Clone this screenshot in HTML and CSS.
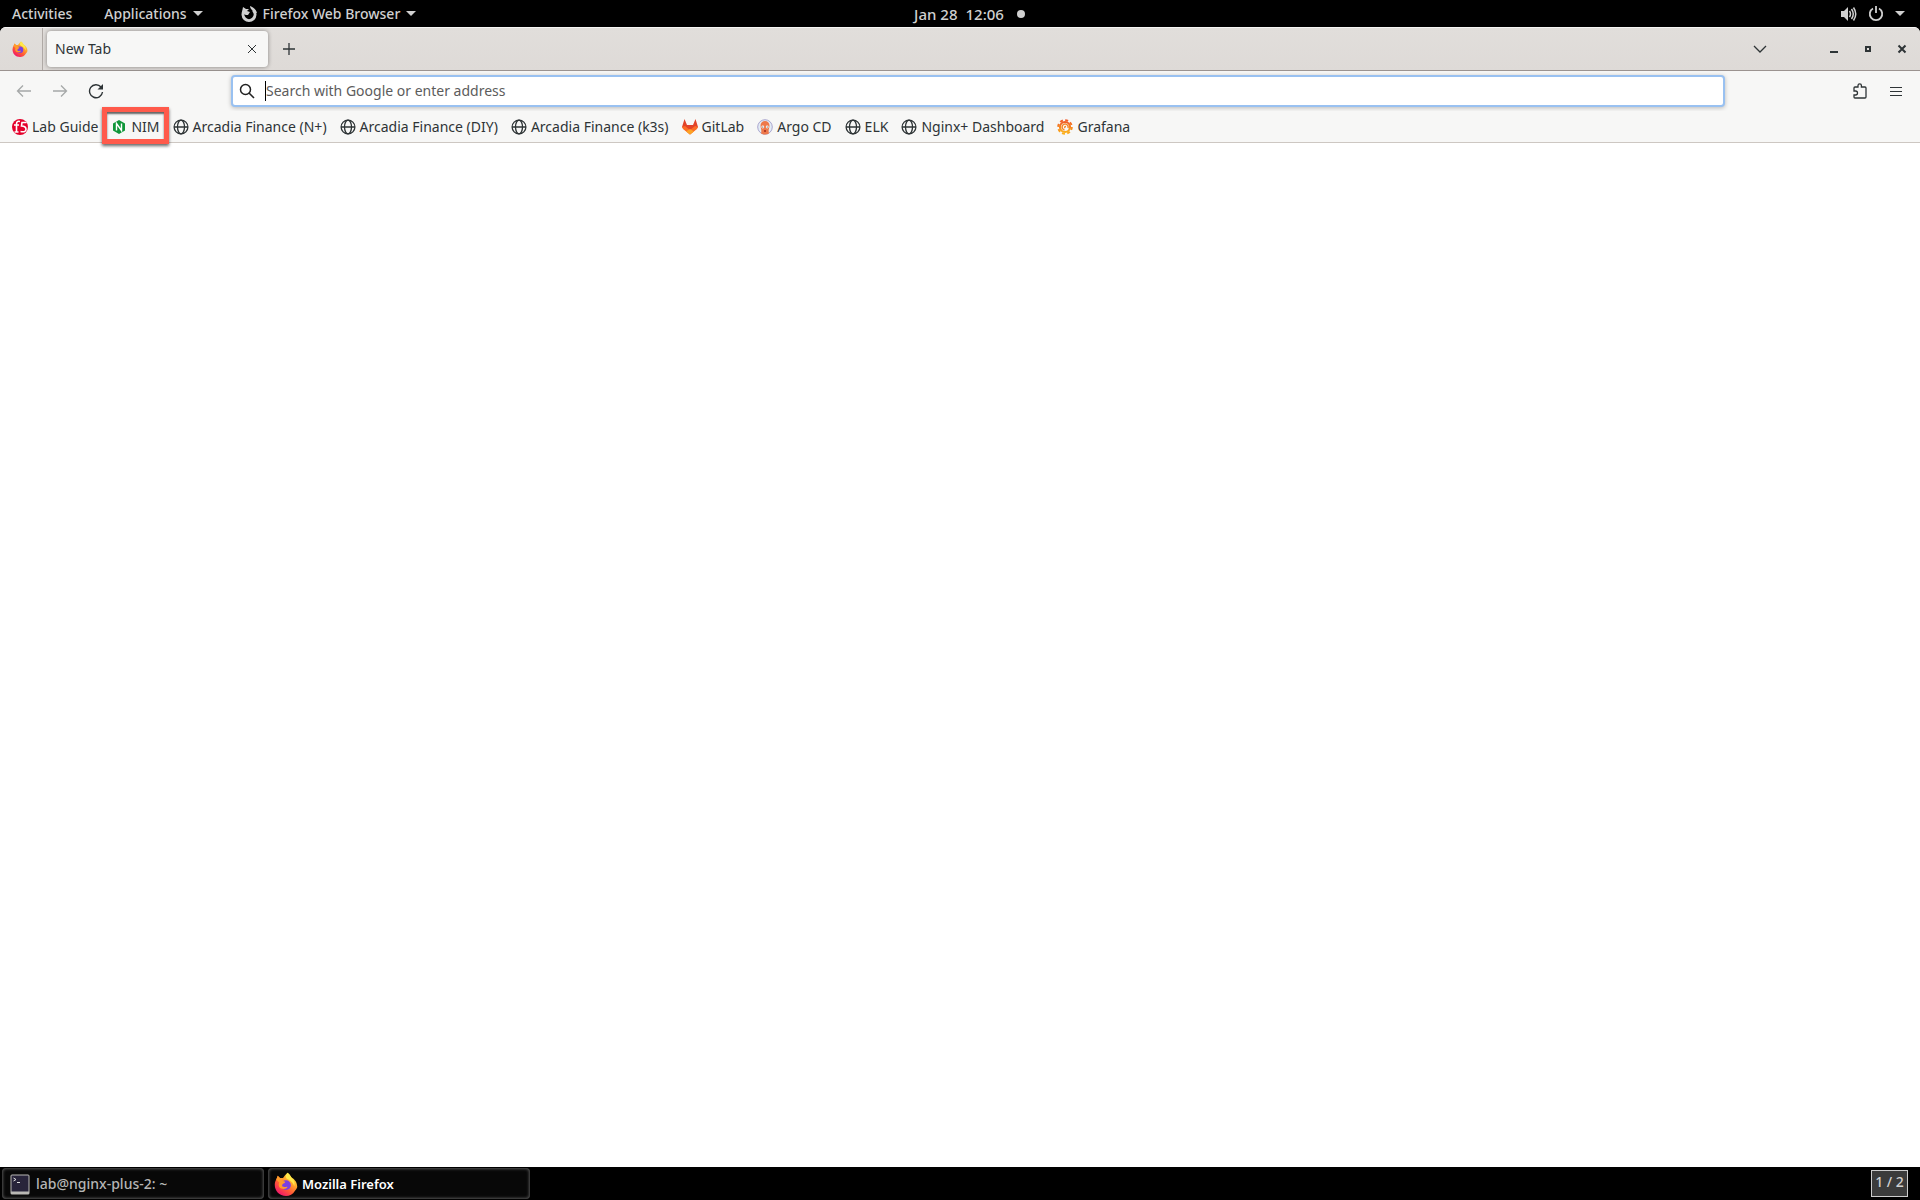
FILE: index.html
```html
<!DOCTYPE html>
<html lang="en">
<head>
<meta charset="utf-8">
<meta name="viewport" content="width=device-width, initial-scale=1">
<title>Mozilla Firefox</title>
<link rel="stylesheet" href="styles.css">
</head>
<body>
<svg class="defs" aria-hidden="true">
  <defs>
    <linearGradient id="ff-body" x1="0.85" y1="0.05" x2="0.2" y2="0.95">
      <stop offset="0" stop-color="#fff04a"/><stop offset="0.35" stop-color="#ffa62b"/>
      <stop offset="0.65" stop-color="#ff5a36"/><stop offset="1" stop-color="#f0136e"/>
    </linearGradient>
    <linearGradient id="gf" x1="0" y1="0" x2="0" y2="1">
      <stop offset="0" stop-color="#f05a28"/><stop offset="1" stop-color="#fbb01c"/>
    </linearGradient>
    <symbol id="firefox" viewBox="0 0 32 32">
      <path fill="url(#ff-body)" d="M18 1c3 2 4 4 5 6 5 3 8 7 8 13a15 12 0 0 1-3 5C25 30 21 32 16 32 7 32 1 25 1 17c0-3 1-6 3-9l1-3 3 3 4 0c2-3 4-5 6-7z"/>
      <path fill="#ffe84a" d="M18 1c4 3 4 5 6 7 3 3 4 7 3 11-1-4-4-7-8-9-4-2-4-5-1-9z"/>
      <circle cx="16" cy="17.500" r="6.500" fill="#7a3fe0"/>
      <path fill="#ff9a2a" d="M3 10l2-5 3 3h4c-1 1-1 3 0 4l3 1c0 2-3 2-4 4s1 3 3 3 3-1 4 0c-1 3-8 4-11 0-1-2-1-4 0-6z"/>
    </symbol>
    <symbol id="globe" viewBox="0 0 16 16">
      <g fill="none" stroke="#2e3436" stroke-width="1.300"><circle cx="8" cy="8" r="6.900"/><ellipse cx="8" cy="8" rx="3.500" ry="6.900"/><path d="M1 8h14"/></g>
    </symbol>
  </defs>
</svg>

<header class="panel">
  <div class="panel-side">
    <button class="activities">Activities</button>
    <button class="applications">Applications <span class="caret"></span></button>
    <button class="app-menu">
      <svg width="16" height="16" viewBox="0 0 16 16" aria-hidden="true"><path fill="none" stroke="#d0d0d0" stroke-width="3" d="M3.500 4.500A6 6 0 1 0 12.500 4.500"/><path fill="#d0d0d0" d="M1 6l1-5 3 2h3l-2 2 3 1-2 3H5L2 8zM9 0c3 1 6 3 7 7l-4-1c0-2-3-3-3-6z"/></svg>
      Firefox Web Browser <span class="caret"></span>
    </button>
  </div>
  <button class="clock"><span>Jan 28</span> <span>12:06</span><span class="dot"></span></button>
  <div class="panel-side panel-status">
    <button class="system" aria-label="System menu">
      <svg width="16" height="16" viewBox="0 0 16 16" aria-hidden="true"><path fill="#d0d0d0" d="M0 5h3l4-4v14l-4-4H0z"/><path fill="none" stroke="#d0d0d0" stroke-width="1.500" d="M8.500 5q2 3 0 6M10.500 3q3.500 5 0 10M12.500 1.500q4.500 6.500 0 13"/></svg>
      <svg width="16" height="16" viewBox="0 0 16 16" aria-hidden="true"><path fill="none" stroke="#d0d0d0" stroke-width="1.800" d="M5 2.500a6.200 6.200 0 1 0 6 0M8 0v7"/></svg>
      <span class="caret"></span>
    </button>
  </div>
</header>

<main class="window">
  <div class="tabstrip">
    <button class="pinned" aria-label="Firefox View"><svg width="16" height="16"><use href="#firefox"/></svg></button>
    <div class="tab">
      <span>New Tab</span>
      <button aria-label="Close tab"><svg width="10" height="10" viewBox="0 0 10 10"><path class="line" d="M1 1l8 8M9 1L1 9"/></svg></button>
    </div>
    <button class="new-tab" aria-label="New tab"><svg width="12" height="12" viewBox="0 0 12 12"><path class="line" stroke-width="1.300" d="M6 0v12M0 6h12"/></svg></button>
    <div class="window-controls">
      <button class="all-tabs" aria-label="List all tabs"><svg width="14" height="8" viewBox="0 0 14 8"><path class="line" stroke-width="1.300" d="M1 1l6 6 6-6"/></svg></button>
      <button aria-label="Minimize"><svg width="10" height="10" viewBox="0 0 10 10"><path fill="#2e3436" d="M1 7h8v2H1z"/></svg></button>
      <button aria-label="Restore"><svg width="10" height="10" viewBox="0 0 10 10"><path fill="none" stroke="#2e3436" stroke-width="2" d="M3 3h4v4H3z"/></svg></button>
      <button aria-label="Close"><svg width="10" height="10" viewBox="0 0 10 10"><path fill="none" stroke="#2e3436" stroke-width="2" d="M1.500 1.500l7 7M8.500 1.500l-7 7"/></svg></button>
    </div>
  </div>

  <div class="navbar">
    <div class="nav-buttons">
      <button class="faded" aria-label="Back"><svg width="16" height="16" viewBox="0 0 16 16"><path class="line" stroke-width="1.300" d="M15 8H2M7 2.500L1.500 8 7 13.500"/></svg></button>
      <button class="faded" aria-label="Forward"><svg width="16" height="16" viewBox="0 0 16 16"><path class="line" stroke-width="1.300" d="M1 8h13M9 2.500L14.500 8 9 13.500"/></svg></button>
      <button aria-label="Reload"><svg width="16" height="16" viewBox="0 0 16 16"><path class="line" stroke-width="1.400" d="M13 4A6.500 6.500 0 1 0 14.500 9"/><path fill="#2e3436" d="M15 1v5.500H9.500z"/></svg></button>
    </div>
    <label class="urlbar">
      <svg width="16" height="16" viewBox="0 0 16 16" aria-hidden="true"><circle cx="6.500" cy="6.500" r="5" fill="none" stroke="#222" stroke-width="1.500"/><path stroke="#222" stroke-width="1.600" d="M10 10l5 5"/></svg>
      <span class="cursor"></span>
      <input type="text" aria-label="Address" placeholder="Search with Google or enter address">
    </label>
    <div class="nav-end">
      <button aria-label="Extensions"><svg width="16" height="16" viewBox="0 0 16 16"><path class="line" stroke-width="1.300" d="M2 8V5q0-1 1-1h3V2.500a1.700 1.700 0 0 1 3.400 0V4H13q1 0 1 1v9q0 1-1 1H3q-1 0-1-1v-2h1.500a1.900 1.900 0 0 0 0-4z"/></svg></button>
      <button aria-label="Menu"><svg width="12" height="11" viewBox="0 0 12 11"><path class="line" d="M0 1.500h12M0 5.500h12M0 9.500h12"/></svg></button>
    </div>
  </div>

  <nav class="bookmarks" aria-label="Bookmarks">
    <a href="#"><svg width="16" height="16" viewBox="0 0 16 16"><circle cx="8" cy="8" r="8" fill="#e4002b"/><path fill="none" stroke="#fff" stroke-width="1.600" d="M8 2.500Q4.500 1.500 4.500 5v7.500M2 6h5M2.500 13h4M14.500 3.500H10L9.500 7q4.500 0 4.500 3.300T8.500 12.500"/></svg>Lab Guide</a>
    <a href="#" class="highlighted"><svg width="16" height="16" viewBox="0 0 16 16"><path fill="#109639" d="M8 1l6 3.500v7L8 15l-6-3.500v-7z"/><path fill="none" stroke="#fff" stroke-width="1.400" d="M5.500 11.500v-7l5 7v-7"/></svg>NIM</a>
    <a href="#"><svg width="16" height="16"><use href="#globe"/></svg>Arcadia Finance (N+)</a>
    <a href="#"><svg width="16" height="16"><use href="#globe"/></svg>Arcadia Finance (DIY)</a>
    <a href="#"><svg width="16" height="16"><use href="#globe"/></svg>Arcadia Finance (k3s)</a>
    <a href="#"><svg width="16" height="16" viewBox="0 0 16 16"><path fill="#e24329" d="M2.500 0L5 6h6l2.500-6L16 8l-8 7.500L0 8z"/><path fill="#fc6d26" d="M0 8l3-1 5 4 5-4 3 1-1 2-7 5.500L1 10z"/><path fill="#fca326" d="M4 12.500L8 10l4 2.500-4 3z"/></svg>GitLab</a>
    <a href="#"><svg width="16" height="16" viewBox="0 0 16 16"><circle cx="8" cy="8" r="7.300" fill="#e3ecf5" stroke="#aaa6ce"/><path fill="#ee794b" d="M3.500 6.500a4.500 4.500 0 0 1 9 0c0 3-1.500 4-.5 8q-4 2-8 0c1-4-.5-5-.5-8z"/><circle cx="5.800" cy="8" r="1.400" fill="#fff"/><circle cx="10.200" cy="8" r="1.400" fill="#fff"/><circle cx="5.800" cy="8" r=".6" fill="#333"/><circle cx="10.200" cy="8" r=".6" fill="#333"/><path fill="#b23b26" d="M7 11h2v2H7z"/></svg>Argo CD</a>
    <a href="#"><svg width="16" height="16"><use href="#globe"/></svg>ELK</a>
    <a href="#"><svg width="16" height="16"><use href="#globe"/></svg>Nginx+ Dashboard</a>
    <a href="#"><svg width="16" height="16" viewBox="0 0 16 16"><circle cx="8" cy="8" r="5" fill="none" stroke="url(#gf)" stroke-width="2.200"/><circle cx="8" cy="8" r="6.800" fill="none" stroke="url(#gf)" stroke-width="2" stroke-dasharray="3 2.340"/><path fill="none" stroke="#f58426" stroke-width="1.400" d="M11 9A3 3 0 1 0 7.500 11M8 9q-1-1.500 1-1.500"/></svg>Grafana</a>
  </nav>

  <section class="page" aria-label="Page content"></section>
</main>

<footer class="taskbar">
  <button class="task">
    <svg width="20" height="22" viewBox="0 0 20 22" aria-hidden="true"><rect x=".5" y="1.500" width="19" height="20" rx="1.500" fill="#b9b8b4"/><rect x="1.500" y="2.500" width="17" height="16" fill="#28243a"/><path fill="none" stroke="#e0e0e0" d="M3.500 5L6 6.500 3.500 8M7 9.500h3"/></svg>
    lab@nginx-plus-2: ~
  </button>
  <button class="task active">
    <svg width="24" height="24" aria-hidden="true"><use href="#firefox"/></svg>
    Mozilla Firefox
  </button>
  <button class="workspace">1 / 2</button>
</footer>
</body>
</html>
```
FILE: styles.css
```css
* { box-sizing: border-box; }
body {
  margin: 0;
  min-height: 100vh;
  display: flex;
  flex-direction: column;
  background: #000;
  color: #2e3436;
  font: 14px/20px "Noto Sans", "Open Sans", sans-serif;
}
button {
  display: flex;
  align-items: center;
  justify-content: center;
  padding: 0;
  border: 0;
  background: none;
  color: inherit;
  font: inherit;
  white-space: nowrap;
}
svg { flex: none; }
.defs { position: absolute; width: 0; height: 0; }
.line { fill: none; stroke: #2e3436; }

.panel {
  display: flex;
  align-items: center;
  height: 27px;
  padding: 0 15px 0 12px;
  color: #d0d0d0;
  font-size: 14px;
  font-weight: 500;
}
.panel-side { display: flex; flex: 1; }
.panel-status { justify-content: flex-end; }
.panel button { gap: 6px; }
.panel .applications { margin-left: 32px; }
.panel .app-menu { margin-left: 38px; }
.panel .clock {
  gap: 8px;
  padding-left: 22px;
  font-size: 15px;
}
.dot {
  width: 8px;
  height: 8px;
  margin-left: 5px;
  border-radius: 50%;
  background: #d0d0d0;
}
.caret {
  border: 5px solid transparent;
  border-top-color: #d0d0d0;
  border-bottom: 0;
}
.panel .system { gap: 11px; }

.window {
  flex: 1;
  display: flex;
  flex-direction: column;
  background: #fff;
  border-radius: 6px 6px 0 0;
  overflow: hidden;
}
.tabstrip {
  display: flex;
  height: 44px;
  border-top: 1px solid #f6f5f4;
  border-bottom: 1px solid #9b9390;
  background: linear-gradient(#e1dedb, #dedad7);
}
.pinned {
  width: 43px;
  padding-right: 3px;
  border-right: 1px solid #b0aaa6;
}
.tab {
  display: flex;
  align-items: center;
  justify-content: space-between;
  width: 221px;
  margin: 3px 4px;
  padding: 0 11px 0 8px;
  border-radius: 4px;
  background: #f7f7f6;
  box-shadow: 0 0 4px rgba(0, 0, 0, .4);
}
.new-tab { width: 34px; }
.window-controls {
  display: flex;
  margin-left: auto;
  padding-right: 1px;
}
.window-controls button { width: 34px; }
.window-controls .all-tabs { margin-right: 40px; }

.navbar {
  display: flex;
  align-items: center;
  height: 40px;
  background: #f7f7f6;
}
.nav-buttons {
  display: flex;
  width: 231px;
  padding-left: 6px;
}
.nav-buttons button, .nav-end button { width: 36px; height: 32px; }
.faded { opacity: .4; }
.urlbar {
  display: flex;
  align-items: center;
  flex: 1;
  height: 32px;
  padding-left: 6px;
  border: 2px solid #99c1f1;
  border-radius: 4px;
  background: #fff;
  box-shadow: 0 1px 4px rgba(0, 0, 0, .25);
}
.cursor {
  width: 1px;
  height: 20px;
  margin-left: 10px;
  background: #000;
}
.urlbar input {
  flex: 1;
  padding: 0;
  border: 0;
  outline: 0;
  background: none;
  font: inherit;
}
.urlbar input::placeholder { color: #5c5c5c; opacity: 1; }
.nav-end {
  display: flex;
  justify-content: flex-end;
  width: 195px;
  padding-right: 6px;
}

.bookmarks {
  display: flex;
  align-items: center;
  gap: 13px;
  height: 32px;
  padding: 0 12px;
  border-bottom: 1px solid #cdc7c2;
  background: #f7f7f6;
}
.bookmarks a {
  display: flex;
  align-items: center;
  gap: 4px;
  color: inherit;
  text-decoration: none;
  white-space: nowrap;
}
.highlighted { position: relative; }
.highlighted::after {
  content: "";
  position: absolute;
  inset: -10px -9px -7px;
  border: 5px solid #ff5a4b;
  box-shadow: 0 2px 3px rgba(0, 0, 0, .6), inset 0 2px 2px rgba(0, 0, 0, .6);
}
.page { flex: 1; }

.taskbar {
  display: flex;
  align-items: center;
  gap: 4px;
  height: 33px;
  padding: 0 12px 0 2px;
  color: #b5b5b5;
}
.task {
  justify-content: flex-start;
  gap: 6px;
  width: 262px;
  height: 31px;
  padding-left: 8px;
  border-radius: 4px;
  background: #080808;
  box-shadow: inset 0 0 3px 1px #555;
  font-weight: 500;
}
.active {
  gap: 4px;
  padding-left: 6px;
  color: #fff;
  font-size: 13px;
  font-weight: 600;
}
.workspace {
  width: 37px;
  height: 27px;
  margin-left: auto;
  padding-bottom: 4px;
  border: 1px solid #ccc;
  background: #3b3b3b;
  color: #d0d0d0;
  font-weight: 500;
}
```
